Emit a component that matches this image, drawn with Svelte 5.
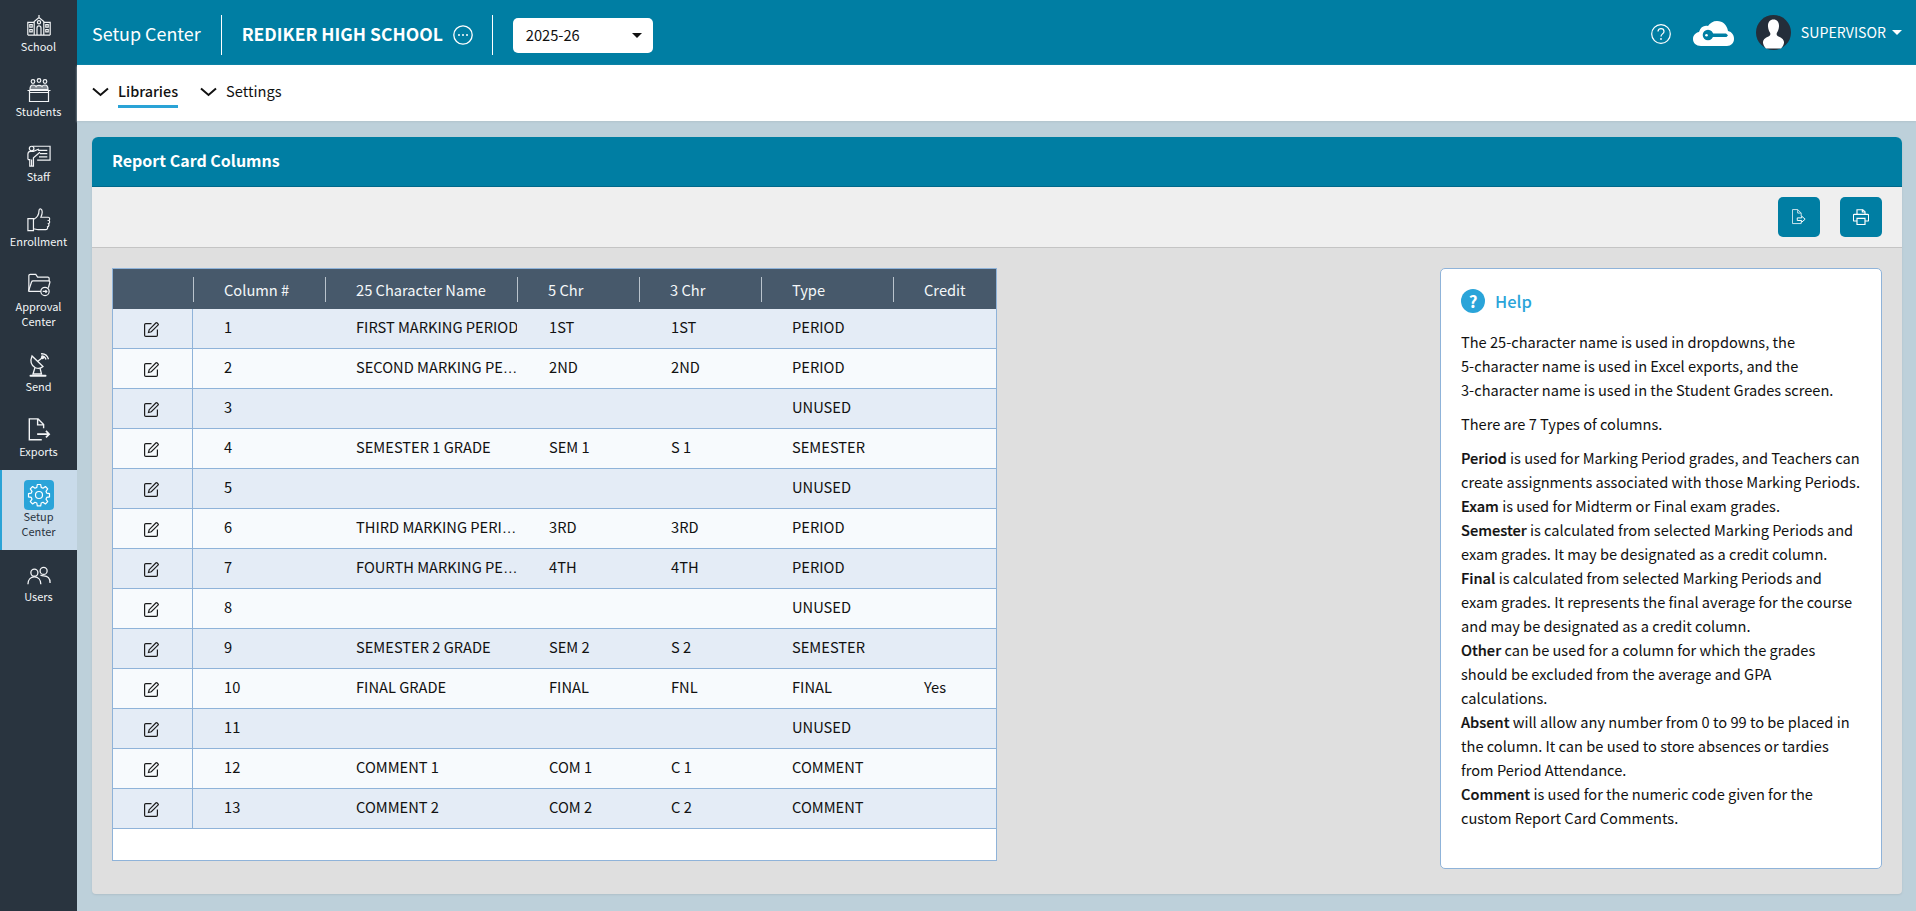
<script>
  const rows = [
    ['1','FIRST MARKING PERIOD','1ST','1ST','PERIOD',''],
    ['2','SECOND MARKING PE|','2ND','2ND','PERIOD',''],
    ['3','','','','UNUSED',''],
    ['4','SEMESTER 1 GRADE','SEM 1','S 1','SEMESTER',''],
    ['5','','','','UNUSED',''],
    ['6','THIRD MARKING PERI|','3RD','3RD','PERIOD',''],
    ['7','FOURTH MARKING PE|','4TH','4TH','PERIOD',''],
    ['8','','','','UNUSED',''],
    ['9','SEMESTER 2 GRADE','SEM 2','S 2','SEMESTER',''],
    ['10','FINAL GRADE','FINAL','FNL','FINAL','Yes'],
    ['11','','','','UNUSED',''],
    ['12','COMMENT 1','COM 1','C 1','COMMENT',''],
    ['13','COMMENT 2','COM 2','C 2','COMMENT','']
  ];
  const heads = ['Column #','25 Character Name','5 Chr','3 Chr','Type','Credit'];
</script>

<div class="app">
  <nav class="side">
    <a class="item">
      <span class="ico"><svg width="24" height="21" viewBox="0 0 30 26" fill="none" stroke="currentColor" stroke-width="1.500"><path d="M1 25V9h8M29 25V9h-8M9 25V8l6-5 6 5v17M15 3V0M1 25h28"/><circle cx="15" cy="9" r="2"/><path d="M12.500 25v-9a2.500 2.500 0 0 1 5 0v9M3.500 12h3v3h-3zM3.500 18h3v3h-3zM23.500 12h3v3h-3zM23.500 18h3v3h-3z"/></svg></span>
      <span class="lbl">School</span>
    </a>
    <a class="item">
      <span class="ico"><svg width="24" height="24" viewBox="0 0 24 24" fill="none" stroke="currentColor" stroke-width="1.200"><circle cx="6" cy="3.500" r="1.800"/><circle cx="12" cy="2.500" r="1.800"/><circle cx="18" cy="3.500" r="1.800"/><path d="M3 11.500c0-3 1-4.500 3-4.500s2.500.5 3 1.500c.5-1.500 5-1.500 6 0 .5-1 1-1.500 3-1.500s3 1.500 3 4.500z" fill="currentColor" fill-opacity=".45"/><path d="M.5 12.500h23M2.500 14.500h19v9h-19zM2.500 12.500v2M21.500 12.500v2"/></svg></span>
      <span class="lbl">Students</span>
    </a>
    <a class="item">
      <span class="ico"><svg width="24" height="24" viewBox="0 0 26 26" fill="none" stroke="currentColor" stroke-width="1.300"><path d="M6 3.500h19v15H11M12 8h10M14 11.500h8M13 15h9"/><circle cx="5" cy="6" r="2.500"/><path d="M1 18v-6c0-2 1-3 3-3h3l6-2.500M1 18h2v7h4v-9l7-6M5 18v7"/></svg></span>
      <span class="lbl">Staff</span>
    </a>
    <a class="item">
      <span class="ico"><svg width="24" height="24" viewBox="0 0 26 26" fill="none" stroke="currentColor" stroke-width="1.300"><path d="M1 11.500h6v13H1zM7 12.500c4-2 6-6 6-9.500 0-1.500 1-2.500 2-2 2 1 2 5 0 9h8c2 0 2 3 .5 3.500 1.500.5 1.500 3-.3 3.500 1 1 .5 3-1 3.500.5 1.500-.5 3-2 3H12c-2 0-3-1-5-1"/></svg></span>
      <span class="lbl">Enrollment</span>
    </a>
    <a class="item two">
      <span class="ico"><svg width="24" height="24" viewBox="0 0 26 26" fill="none" stroke="currentColor" stroke-width="1.300"><path d="M2 19V3c0-1 .5-1.500 1.500-1.500h6l2 3h11c1 0 1.500.5 1.500 1.500v3"/><path d="M1.500 20 5 9.500c.2-.7.700-1 1.500-1h17c1 0 1.500.7 1.300 1.500l-1.600 6M1.500 20H15"/><circle cx="19.500" cy="20" r="4.500"/><path d="M17 20h4.500m-1.500-1.500 1.500 1.500-1.500 1.500"/></svg></span>
      <span class="lbl">Approval<br />Center</span>
    </a>
    <a class="item">
      <span class="ico"><svg width="22" height="24" viewBox="0 0 22 24" fill="none" stroke="currentColor" stroke-width="1.300"><path d="M4 3c-2 5-1 9 3 11.500 3 1.500 6 1 8-1z"/><path d="M9.500 8.500 14 5"/><circle cx="14.500" cy="4.500" r="1" fill="currentColor"/><path d="M13 .8c3.500-.3 6.500 2 7.500 5.500M13.500 3c2.200 0 3.800 1.300 4.500 3.500M7 14.500 5 21h8.500l-1.500-6"/><path d="M2.500 22.800h15" stroke-width="2" stroke-linecap="round"/></svg></span>
      <span class="lbl">Send</span>
    </a>
    <a class="item">
      <span class="ico"><svg width="24" height="24" viewBox="0 0 26 26" fill="none" stroke="currentColor" stroke-width="1.500"><path d="M18 11V7l-6-6H2.500v22.500H16M11.500 1.500V7.500H18"/><path d="M11 17.500h12.500M20.500 14l3.500 3.500-3.500 3.500" stroke-width="1.800"/></svg></span>
      <span class="lbl">Exports</span>
    </a>
    <a class="item two active">
      <span class="gear"><svg width="24" height="24" viewBox="0 0 24 24" fill="none" stroke="#fff" stroke-width="1.200" stroke-linejoin="round"><circle cx="12" cy="12" r="3.500"/><path d="M10.300 1.500h3.400l.5 2.900 1.800.8 2.400-1.700 2.300 2.400-1.700 2.400.7 1.800 2.800.5v3.300l-2.800.5-.7 1.800 1.700 2.400-2.300 2.400-2.400-1.700-1.800.7-.5 2.900h-3.400l-.5-2.900-1.800-.7-2.400 1.700-2.300-2.400 1.700-2.400-.7-1.800-2.800-.5v-3.300l2.800-.5.7-1.800-1.700-2.400 2.300-2.400 2.400 1.700 1.800-.8z"/></svg></span>
      <span class="lbl">Setup<br />Center</span>
    </a>
    <a class="item">
      <span class="ico"><svg width="24" height="19" viewBox="0 0 26 20" fill="none" stroke="currentColor" stroke-width="1.400"><circle cx="8" cy="7" r="3.800"/><circle cx="18" cy="5" r="3.800"/><path d="M1 19.500c0-5 3-8 7-8s7 3 7 8M14.500 9.500c1 .6 2.300 1 3.500 1 4 0 7 2.500 7 7.500"/></svg></span>
      <span class="lbl">Users</span>
    </a>
  </nav>

  <div class="main">
    <header class="top">
      <div class="app-name">Setup Center</div>
      <div class="school">
        <b>REDIKER HIGH SCHOOL</b>
        <svg width="20" height="20" viewBox="0 0 20 20" fill="none" stroke="#fff" stroke-width="1.300"><circle cx="10" cy="10" r="9.200"/><circle cx="6" cy="10" r="1" fill="#fff" stroke="none"/><circle cx="10" cy="10" r="1" fill="#fff" stroke="none"/><circle cx="14" cy="10" r="1" fill="#fff" stroke="none"/></svg>
      </div>
      <div class="year"><span>2025-26</span><i class="caret"></i></div>
      <div class="tools">
        <svg class="q" width="20" height="20" viewBox="0 0 20 20" fill="none" stroke="#fff" stroke-width="1.200"><circle cx="10" cy="10" r="9.300"/><path d="M7 7.500C7 5.500 8.500 4.600 10 4.600s3 1 3 2.800c0 2.400-3 2.500-3 5"/><circle cx="10" cy="15" r=".9" fill="#fff" stroke="none"/></svg>
        <svg class="cloud" width="41" height="25" viewBox="0 0 41 25"><path d="M8 25C3 25 0 22 0 18c0-4 3-6.500 6-7C7.500 6 11 4 15 5 17 2 20 0 24 0c6 0 10 4 11 10 4 1 6 4 6 8 0 4-3 7-7 7z" fill="#fff"/><circle cx="15" cy="14" r="5.300" fill="#007ea3"/><path d="M18 12.500h15l2 1.700-1.500 1.700H18z" fill="#007ea3"/><circle cx="13.500" cy="14.200" r="1.300" fill="#fff"/></svg>
        <svg class="avatar" width="35" height="35" viewBox="0 0 35 35"><circle cx="17.500" cy="17.500" r="17.500" fill="#242e3a"/><path d="M17.500 4.500c3.800 0 5.800 3 5.500 7-.2 2.800-1.200 5-2.200 6.500-.4 1.200 0 2.500 1.200 3.200 3 1.500 5.500 2.300 6 5.800.3 2-1.500 5-3 6.500h-15c-1.500-1.500-3.300-4.500-3-6.500.5-3.500 3-4.300 6-5.800 1.200-.7 1.600-2 1.200-3.200-1-1.500-2-3.700-2.200-6.500-.3-4 1.700-7 5.500-7z" fill="#fff"/></svg>
        <span class="user">SUPERVISOR</span><i class="caret white"></i>
      </div>
    </header>

    <div class="subnav">
      <div class="tab on">
        <svg width="17" height="10" viewBox="0 0 17 10" fill="none" stroke="#111" stroke-width="2"><path d="M1 1.500 8.500 8 16 1.500"/></svg>
        <span class="tl">Libraries</span>
      </div>
      <div class="tab">
        <svg width="17" height="10" viewBox="0 0 17 10" fill="none" stroke="#111" stroke-width="2"><path d="M1 1.500 8.500 8 16 1.500"/></svg>
        <span class="tl">Settings</span>
      </div>
    </div>

    <section class="card">
      <h1>Report Card Columns</h1>
      <div class="toolbar">
        <button aria-label="Export">
          <svg width="14" height="16" viewBox="0 0 16 18" fill="none" stroke="#cfe6ee" stroke-width="1.100"><path d="M10.500 8V4.500l-4-4H.5v16h10V14M6.500.5v4h4"/><path d="M6 10h5V8l4 3.500-4 3.500v-2H6z" stroke="#fff"/></svg>
        </button>
        <button aria-label="Print">
          <svg width="16" height="16" viewBox="0 0 18 18" fill="none" stroke="#fff" stroke-width="1.300"><path d="M4.500 6V.8h6.500L13.500 3v3M4 13.500H1.200c-.4 0-.7-.3-.7-.7V7c0-.6.400-1 1-1h15c.6 0 1 .4 1 1v5.800c0 .4-.3.700-.7.700H14M4.500 10.500h9v7h-9z"/><path d="M10.500.8v2.600H13.500"/></svg>
        </button>
      </div>
      <div class="body">
        <div class="table-wrap">
          <table>
            <colgroup><col class="c0" /><col class="c1" /><col class="c2" /><col class="c3" /><col class="c4" /><col class="c5" /><col class="c6" /></colgroup>
            <thead>
              <tr>
                <th></th>
                {#each heads as h}<th><span>{h}</span></th>{/each}
              </tr>
            </thead>
            <tbody>
              {#each rows as r, i}
                <tr class:alt={i % 2 === 1}>
                  <td class="edit">
                    <svg width="15" height="15" viewBox="0 0 15 15" fill="none" stroke="#1c1c1c" stroke-width="1.200"><path d="M7.500 1.600H1.800C1.100 1.600.6 2.100.6 2.800v10.400c0 .7.500 1.200 1.200 1.200h10.400c.7 0 1.200-.5 1.200-1.200V7.500"/><path d="M4.500 10.500l.7-2.800L11.800 1c.4-.4 1-.4 1.400 0l.8.8c.4.400.4 1 0 1.400L7.300 9.800z"/></svg>
                  </td>
                  {#each r as v}
                    <td><div class="cell">{v.replace('|', '')}{#if v.endsWith('|')}<span class="ell">…</span>{/if}</div></td>
                  {/each}
                </tr>
              {/each}
            </tbody>
          </table>
        </div>
        <aside class="help">
          <div class="help-title">
            <span class="hq">?</span>
            <span>Help</span>
          </div>
          <p>The 25-character name is used in dropdowns, the<br />5-character name is used in Excel exports, and the<br />3-character name is used in the Student Grades screen.</p>
          <p>There are 7 Types of columns.</p>
          <p><b>Period</b> is used for Marking Period grades, and Teachers can create assignments associated with those Marking Periods.<br />
          <b>Exam</b> is used for Midterm or Final exam grades.<br />
          <b>Semester</b> is calculated from selected Marking Periods and exam grades. It may be designated as a credit column.<br />
          <b>Final</b> is calculated from selected Marking Periods and<br />exam grades. It represents the final average for the course and may be designated as a credit column.<br />
          <b>Other</b> can be used for a column for which the grades should be excluded from the average and GPA<br />calculations.<br />
          <b>Absent</b> will allow any number from 0 to 99 to be placed in the column. It can be used to store absences or tardies from Period Attendance.<br />
          <b>Comment</b> is used for the numeric code given for the custom Report Card Comments.</p>
        </aside>
      </div>
    </section>
  </div>
</div>

<style>
  :global(body) { margin: 0; }
  .app {
    display: flex; width: 1916px; height: 911px; overflow: hidden;
    font-family: "Noto Sans CJK SC", "Noto Sans", sans-serif;
    font-size: 15px; color: #111; background: #bdd0da;
  }
  .side { width: 77px; flex: none; background: #29343f; color: #fff; display: flex; flex-direction: column; }
  .item { height: 65px; display: flex; flex-direction: column; align-items: center; padding-top: 13px; box-sizing: border-box; color: #f2f4f6; }
  .item.two { height: 80px; }
  .ico { height: 24px; display: flex; align-items: center; justify-content: center; }
  .ico svg { display: block; }
  .lbl { margin-top: 2px; font-size: 11px; line-height: 15px; text-align: center; }
  .item.active { background: #c9dbea; color: #29343f; border-left: 2px solid #2aa3d6; padding-top: 10px; padding-right: 2px; }
  .gear { width: 30px; height: 30px; background: #2aa4d9; border-radius: 4px; display: flex; align-items: center; justify-content: center; }
  .item.active .lbl { margin-top: -1px; }
  .main { flex: 1; min-width: 0; display: flex; flex-direction: column; }
  .top { height: 65px; background: #007ea3; color: #fff; display: flex; align-items: flex-start; padding: 0 14px 0 15px; flex: none; box-sizing: border-box; }
  .app-name { font-size: 17.900px; line-height: 37px; margin-top: 15px; height: 40px; padding-right: 20px; border-right: 1px solid #fff; white-space: nowrap; }
  .school { display: flex; align-items: center; gap: 10px; height: 40px; margin-top: 15px; padding: 0 19px 0 20px; border-right: 1px solid #fff; }
  .school b { font-size: 17.500px; font-weight: 600; line-height: 37px; margin-bottom: 3px; }
  .year { margin: 18px 0 0 20px; width: 140px; height: 35px; background: #fff; border-radius: 5px; color: #111; display: flex; align-items: center; justify-content: space-between; padding: 0 11px 2px 13px; box-sizing: border-box; font-size: 14.670px; }
  .caret { width: 0; height: 0; border-left: 5px solid transparent; border-right: 5px solid transparent; border-top: 5px solid #111; }
  .year .caret { margin-top: 2px; }
  .caret.white { border-top-color: #fff; margin-left: 6px; margin-top: -1px; }
  .tools { margin-left: auto; height: 65px; display: flex; align-items: center; }
  .q { margin-right: 22px; margin-top: 3px; }
  .cloud { margin-right: 22px; margin-top: 2px; }
  .avatar { margin-right: 10px; }
  .user { font-size: 14.150px; line-height: 20px; margin-top: -2px; }
  .subnav { height: 56px; background: #fff; flex: none; display: flex; padding-left: 15px; gap: 22px; box-shadow: 0 1px 2px #b2c3cc; }
  .tab { display: flex; align-items: flex-start; gap: 9px; }
  .tab svg { margin-top: 22px; }
  .tl { font-size: 14.670px; line-height: 20px; margin-top: 16px; padding-bottom: 4px; border-bottom: 3px solid transparent; }
  .tab.on .tl { font-size: 14.400px; font-weight: 500; border-bottom-color: #2aa3d6; }
  .card { margin: 16px 14px 0 15px; height: 757px; background: #dfdfdf; border-radius: 6px 6px 4px 4px; display: flex; flex-direction: column; box-shadow: 0 1px 2px #aebfc9; overflow: hidden; }
  h1 { margin: 0; height: 50px; flex: none; background: #007ea3; color: #fff; font-size: 16px; font-weight: 700; line-height: 47px; padding-left: 20px; box-shadow: inset 0 -1px 0 #00688a; }
  .toolbar { height: 61px; flex: none; box-sizing: border-box; background: #efefef; border-bottom: 1px solid #c4c4c4; display: flex; justify-content: flex-end; align-items: center; gap: 20px; padding-right: 20px; }
  button { width: 42px; height: 40px; padding: 0; border: 0; background: #007ea3; border-radius: 5px; display: flex; align-items: center; justify-content: center; }
  .body { flex: 1; display: flex; justify-content: space-between; padding: 20px 20px 0 20px; align-items: flex-start; }
  .table-wrap { width: 885px; height: 593px; box-sizing: border-box; background: #fff; border: 1px solid #8fb3d9; }
  table { border-collapse: separate; border-spacing: 0; table-layout: fixed; width: 883px; }
  .c0 { width: 80px; } .c1 { width: 132px; } .c2 { width: 192px; } .c3, .c4 { width: 122px; } .c5 { width: 132px; } .c6 { width: 103px; }
  th { height: 40px; padding: 0; background: #47596b; color: #f4f7f9; font-weight: 400; font-size: 14.670px; text-align: left; }
  th:not(:first-child) span { display: block; border-left: 1px solid #b9c3cc; line-height: 25px; padding-left: 30px; white-space: nowrap; }
  td { height: 40px; box-sizing: border-box; padding: 0; font-size: 14.670px; border-top: 1px solid #8fb3d9; background: #e4ecf6; }
  tbody tr:first-child td { border-top: 0; height: 39px; }
  tbody tr:last-child td { border-bottom: 1px solid #8fb3d9; height: 41px; }
  tr.alt td { background: #f7fafd; }
  td.edit { border-right: 1px solid #8fb3d9; }
  td.edit svg { display: block; margin: 2px 0 0 31px; }
  .cell { padding: 0 0 3px 31px; line-height: 20px; white-space: nowrap; overflow: hidden; }
  td:nth-child(4) .cell, td:nth-child(5) .cell { padding-left: 32px; }
  .ell { font-family: "Liberation Sans", sans-serif; }
  .help { width: 442px; height: 601px; box-sizing: border-box; background: #fff; border: 1px solid #8fb3d9; border-radius: 5px; padding: 19px 19px 0 20px; }
  .help-title { display: flex; align-items: center; gap: 10px; color: #2aa4d9; font-size: 16.500px; font-weight: 500; height: 26px; margin-bottom: 16px; }
  .hq { width: 24px; height: 24px; border-radius: 50%; background: #2aa4d9; color: #fff; font-size: 17px; font-weight: 700; line-height: 24px; text-align: center; }
  p { margin: 0 0 10px; font-size: 14.620px; line-height: 24px; }
  p b { font-weight: 500; -webkit-text-stroke: 0.2px #111; }
</style>
